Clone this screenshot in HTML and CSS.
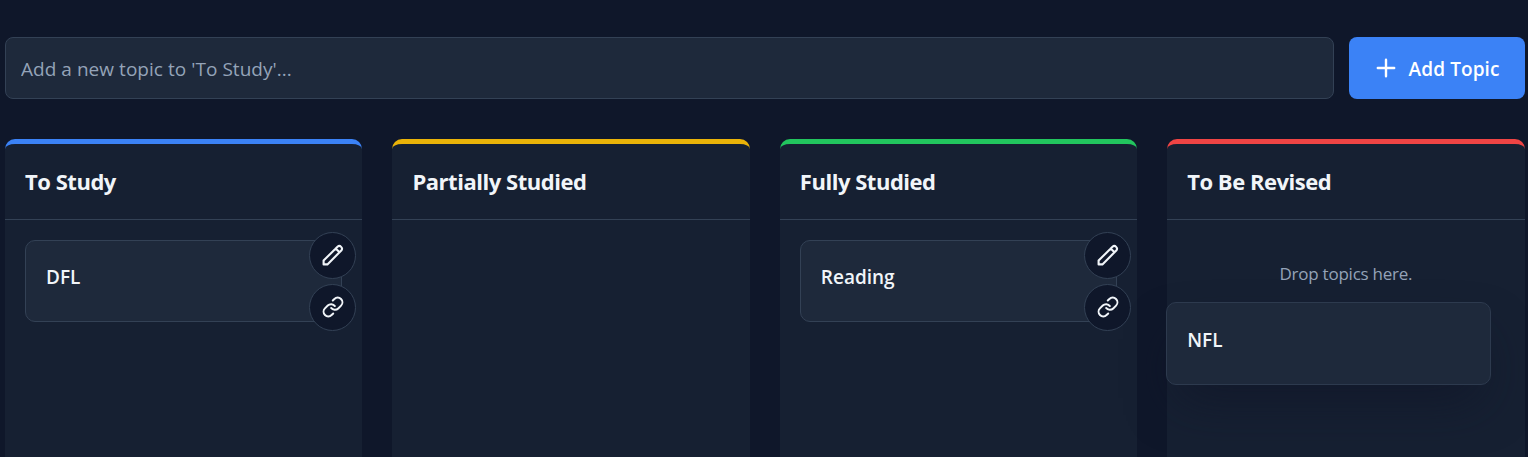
FILE: index.html
```html
<!DOCTYPE html>
<html lang="en">
<head>
<meta charset="utf-8">
<title>Study Board</title>
<link rel="stylesheet" href="styles.css">
</head>
<body>
<svg class="sprite" aria-hidden="true">
  <symbol id="pencil" viewBox="0 0 24 24"><path d="M2.6 17.6 16.5 3.7a2.7 2.7 0 0 1 3.8 3.8L6.4 21.4H2.6ZM14.7 5.5l3.8 3.8"/></symbol>
  <symbol id="link" viewBox="-.7 -.7 25.4 25.4"><path d="M10 13a5 5 0 0 0 7.54.54l3-3a5 5 0 0 0-7.07-7.07l-1.72 1.71M14 11a5 5 0 0 0-7.54-.54l-3 3a5 5 0 0 0 7.07 7.07l1.71-1.71"/></symbol>
</svg>
<main class="page">
  <form class="add-form">
    <input class="topic-input" type="text" placeholder="Add a new topic to 'To Study'...">
    <button class="add-button" type="button">
      <svg class="plus" viewBox="0 0 20 20"><path d="M10 1.8v16.4M1.8 10h16.4"/></svg>
      <span class="add-label">Add Topic</span>
    </button>
  </form>
  <div class="board">
    <section class="column blue">
      <h2 class="column-title">To Study</h2>
      <div class="column-body">
        <article class="card">DFL
          <div class="actions">
            <button class="action" type="button" aria-label="Edit"><svg class="icon"><use href="#pencil"/></svg></button>
            <button class="action" type="button" aria-label="Link"><svg class="icon"><use href="#link"/></svg></button>
          </div>
        </article>
      </div>
    </section>
    <section class="column yellow">
      <h2 class="column-title">Partially Studied</h2>
      <div class="column-body"></div>
    </section>
    <section class="column green">
      <h2 class="column-title">Fully Studied</h2>
      <div class="column-body">
        <article class="card">Reading
          <div class="actions">
            <button class="action" type="button" aria-label="Edit"><svg class="icon"><use href="#pencil"/></svg></button>
            <button class="action" type="button" aria-label="Link"><svg class="icon"><use href="#link"/></svg></button>
          </div>
        </article>
      </div>
    </section>
    <section class="column red">
      <h2 class="column-title">To Be Revised</h2>
      <div class="column-body">
        <p class="empty">Drop topics here.</p>
        <article class="card dragging">NFL</article>
      </div>
    </section>
  </div>
</main>
</body>
</html>
```
FILE: styles.css
```css
* { box-sizing: border-box; }
body {
  margin: 0;
  height: 457px;
  overflow: hidden;
  background: #0f172a;
  color: #f1f5f9;
  font-family: "Open Sans", "Noto Sans", sans-serif;
}
.sprite { position: absolute; width: 0; height: 0; }
.page { display: flex; flex-direction: column; height: 457px; padding: 37px 3.4px 0 5px; }
.add-form { display: flex; flex: none; gap: 15px; height: 62px; }
.topic-input {
  flex: 1;
  min-width: 0;
  padding: 2px 15px 0;
  border: 1px solid #334155;
  border-radius: 8px;
  background: #1e293b;
  color: #f1f5f9;
  font: 400 19px "Open Sans", "Noto Sans", sans-serif;
  letter-spacing: 0.04px;
}
.topic-input::placeholder { color: #94a3b8; opacity: 1; }
.add-button {
  display: flex;
  align-items: center;
  width: 176px;
  padding: 0 0 0 27px;
  border: 0;
  border-radius: 8px;
  background: #3b82f6;
  color: #fff;
  font: 600 19px "Open Sans", "Noto Sans", sans-serif;
}
.plus { width: 20px; height: 20px; margin-right: 13px; fill: none; stroke: #fff; stroke-width: 2.4; stroke-linecap: round; }
.add-label { padding-top: 2px; letter-spacing: 0.1px; }
.board { display: grid; flex: 1; min-height: 0; grid-template-columns: repeat(4, 1fr); gap: 30px; margin-top: 40px; }
.column { border-top: 5px solid; border-radius: 10px 10px 0 0; background: #162032; }
.blue { border-color: #3b82f6; }
.yellow { border-color: #eab308; }
.green { border-color: #22c55e; }
.red { border-color: #ef4444; }
.column-title {
  display: flex;
  align-items: center;
  height: 76px;
  margin: 0;
  padding: 0 20px 2px;
  border-bottom: 1px solid #334155;
  font-size: 22px;
  font-weight: 700;
  line-height: 30px;
  letter-spacing: -0.47px;
  white-space: nowrap;
}
.column-body { position: relative; padding: 20px; }
.card {
  position: relative;
  height: 82px;
  padding: 22px 20px;
  border: 1px solid #334155;
  border-radius: 10px;
  background: #1e293b;
  font-size: 19px;
  font-weight: 600;
  line-height: 28px;
}
.actions { position: absolute; top: -9px; right: -15px; display: flex; flex-direction: column; gap: 5px; }
.action {
  display: flex;
  align-items: center;
  justify-content: center;
  width: 47px;
  height: 47px;
  padding: 0 0 1px;
  border: 1px solid #334155;
  border-radius: 50%;
  background: #0f172a;
}
.icon { width: 24px; height: 24px; fill: none; stroke: #f1f5f9; stroke-width: 2.1; stroke-linecap: round; stroke-linejoin: round; }
.empty { margin: 20px 0 0; color: #94a3b8; font-size: 17px; letter-spacing: -0.24px; line-height: 28px; text-align: center; }
.dragging {
  position: absolute;
  top: 82px;
  left: -1px;
  width: 325px;
  height: 83px;
  padding-top: 23px;
  border-color: #2d3a4e;
  box-shadow: 0 25px 50px -12px rgba(15, 20, 38, 0.65);
}
```
